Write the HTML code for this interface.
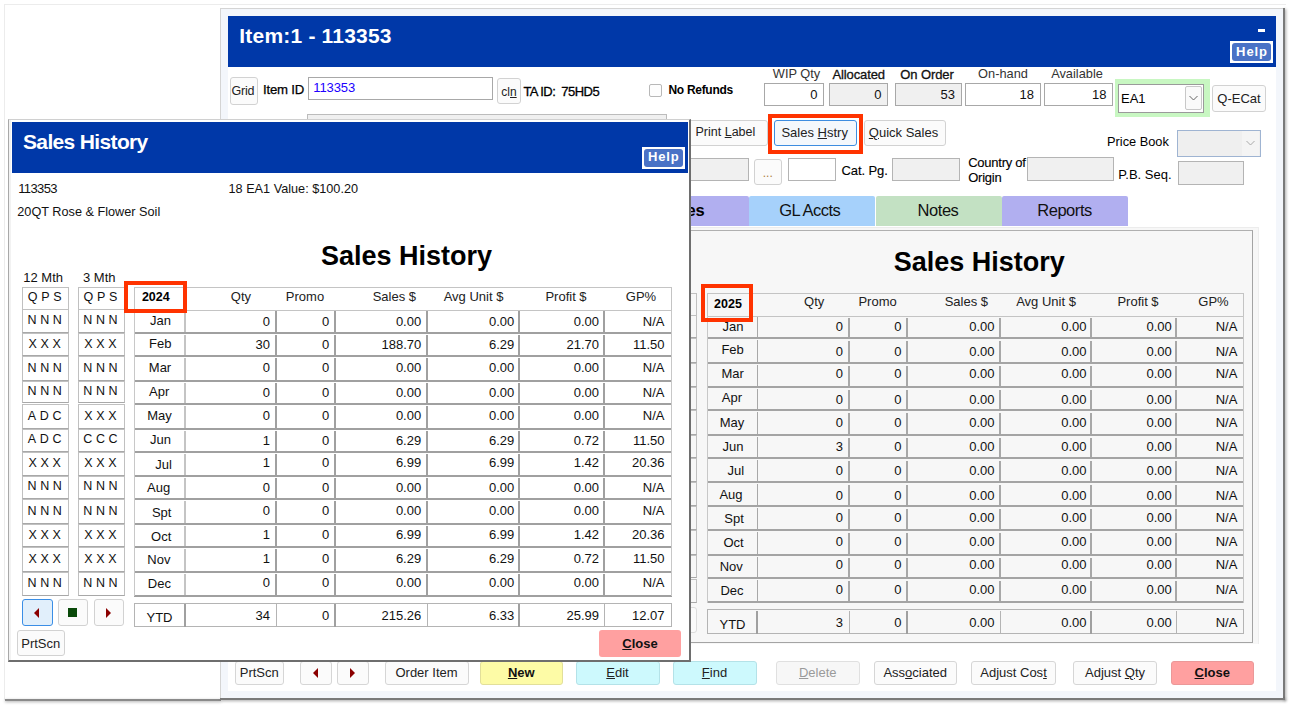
<!DOCTYPE html>
<html><head><meta charset="utf-8"><style>
html,body{margin:0;padding:0;}
body{width:1293px;height:709px;position:relative;overflow:hidden;background:#fff;font-family:"Liberation Sans", sans-serif;}
body>div{position:absolute;}
.t{white-space:nowrap;}
svg{position:absolute;}
</style></head><body>
<div style="left:4px;top:4px;width:1282px;height:1px;background:#ececec;"></div>
<div style="left:4px;top:4px;width:1px;height:696px;background:#ececec;"></div>
<div style="left:5px;top:699px;width:216px;height:2px;background:#8a8a8a;box-shadow:0 1px 3px rgba(0,0,0,.35);"></div>
<div style="left:1283px;top:8px;width:2px;height:692px;background:#7a7a7a;box-shadow:1px 1px 3px rgba(0,0,0,.4);"></div>
<div style="left:220px;top:698px;width:1065px;height:2px;background:#7a7a7a;box-shadow:1px 1px 3px rgba(0,0,0,.4);"></div>
<div style="left:220px;top:8px;width:1063px;height:690px;box-sizing:border-box;background:#f3f6fb;border-left:1px solid #d4d4d4;border-top:1px solid #d4d4d4;"></div>
<div style="left:228px;top:66px;width:1048px;height:625px;background:#fff;"></div>
<div style="left:228px;top:16px;width:1048px;height:51px;background:#0038a8;"></div>
<div class="t" style="top:25.22px;font-size:21px;line-height:21px;color:#fff;font-weight:bold;letter-spacing:0.2px;left:239.3px;">Item:1 - 113353</div>
<div style="left:1257.5px;top:29.3px;width:7.5px;height:2.3999999999999986px;background:#fff;"></div>
<div style="left:1230px;top:41px;width:43px;height:22px;background:#fff;"></div>
<div style="left:1232px;top:43px;width:39px;height:18px;background:#4a72c6;border-radius:3px;"></div>
<div class="t" style="top:44.80px;font-size:13px;line-height:13px;color:#fff;font-weight:bold;letter-spacing:0.9px;left:952px;width:600px;text-align:center;">Help</div>
<div style="left:230px;top:77px;width:28px;height:28px;box-sizing:border-box;background:#fbfbfb;border:1px solid #d2d2d2;border-radius:3px;"></div>
<div class="t" style="top:85.42px;font-size:12.5px;line-height:12.5px;color:#222;letter-spacing:-0.2px;left:-57.19999999999999px;width:600px;text-align:center;">Grid</div>
<div class="t" style="top:83.03px;font-size:13.2px;line-height:13.2px;color:#000;letter-spacing:-0.2px;left:263px;-webkit-text-stroke:0.25px #000;">Item ID</div>
<div style="left:308px;top:77px;width:185px;height:23px;box-sizing:border-box;background:#fff;border:1px solid #a8a8a8;"></div>
<div class="t" style="top:81.30px;font-size:13px;line-height:13px;color:#2000ff;letter-spacing:-0.1px;left:313.3px;">113353</div>
<div style="left:497px;top:78px;width:24px;height:26px;box-sizing:border-box;background:#fbfbfb;border:1px solid #d2d2d2;border-radius:3px;"></div>
<div class="t" style="top:85.84px;font-size:12px;line-height:12px;color:#222;left:209.0px;width:600px;text-align:center;">cl<u>n</u></div>
<div class="t" style="top:85.00px;font-size:13px;line-height:13px;color:#000;letter-spacing:-0.55px;left:523.4px;-webkit-text-stroke:0.3px #000;">TA ID:&nbsp; 75HD5</div>
<div style="left:649px;top:84px;width:13px;height:13px;box-sizing:border-box;border:1px solid #b8b8b8;border-radius:2px;background:#fdfdfd;"></div>
<div class="t" style="top:84.04px;font-size:12px;line-height:12px;color:#000;font-weight:bold;letter-spacing:-0.3px;left:668.5px;">No Refunds</div>
<div class="t" style="top:68.26px;font-size:12.8px;line-height:12.8px;color:#333;left:496.5px;width:600px;text-align:center;">WIP Qty</div>
<div class="t" style="top:68.10px;font-size:13px;line-height:13px;color:#111;letter-spacing:-0.1px;left:558.7px;width:600px;text-align:center;-webkit-text-stroke:0.3px #111;">Allocated</div>
<div class="t" style="top:68.10px;font-size:13px;line-height:13px;color:#111;letter-spacing:-0.1px;left:627px;width:600px;text-align:center;-webkit-text-stroke:0.3px #111;">On Order</div>
<div class="t" style="top:68.26px;font-size:12.8px;line-height:12.8px;color:#333;left:703px;width:600px;text-align:center;">On-hand</div>
<div class="t" style="top:68.26px;font-size:12.8px;line-height:12.8px;color:#333;left:777px;width:600px;text-align:center;">Available</div>
<div style="left:764px;top:83px;width:60px;height:22.5px;box-sizing:border-box;background:#fff;border:1px solid #a8a8a8;"></div>
<div class="t" style="top:88.00px;font-size:13px;line-height:13px;color:#111;left:217.5px;width:600px;text-align:right;">0</div>
<div style="left:829px;top:83px;width:59px;height:22.5px;box-sizing:border-box;background:#f0f0f0;border:1px solid #a8a8a8;"></div>
<div class="t" style="top:88.00px;font-size:13px;line-height:13px;color:#111;left:281.5px;width:600px;text-align:right;">0</div>
<div style="left:894.5px;top:83px;width:67.0px;height:22.5px;box-sizing:border-box;background:#f0f0f0;border:1px solid #a8a8a8;"></div>
<div class="t" style="top:88.00px;font-size:13px;line-height:13px;color:#111;left:355.0px;width:600px;text-align:right;">53</div>
<div style="left:965px;top:83px;width:75.5px;height:22.5px;box-sizing:border-box;background:#fff;border:1px solid #a8a8a8;"></div>
<div class="t" style="top:88.00px;font-size:13px;line-height:13px;color:#111;left:434.0px;width:600px;text-align:right;">18</div>
<div style="left:1044px;top:83px;width:69px;height:22.5px;box-sizing:border-box;background:#fff;border:1px solid #a8a8a8;"></div>
<div class="t" style="top:88.00px;font-size:13px;line-height:13px;color:#111;left:506.5px;width:600px;text-align:right;">18</div>
<div style="left:1114.5px;top:78.5px;width:95.5px;height:38.5px;background:#c8f7c2;"></div>
<div style="left:1118px;top:83.5px;width:86px;height:29.0px;box-sizing:border-box;background:#fff;border:1px solid #9a9a9a;"></div>
<div style="left:1185px;top:86px;width:17px;height:24px;box-sizing:border-box;border:1px solid #c8c8c8;background:#fafafa;border-radius:2px;"></div>
<svg style="position:absolute;left:1188px;top:94px" width="11" height="8"><path d="M1.5 2 L5.5 6 L9.5 2" stroke="#666" stroke-width="1" fill="none"/></svg>
<div class="t" style="top:92.00px;font-size:13px;line-height:13px;color:#000;left:1121px;">EA1</div>
<div style="left:1212px;top:85px;width:54px;height:27px;box-sizing:border-box;background:#fbfbfb;border:1px solid #d2d2d2;border-radius:3px;"></div>
<div class="t" style="top:92.00px;font-size:13px;line-height:13px;color:#222;left:939.0px;width:600px;text-align:center;">Q-ECat</div>
<div style="left:307px;top:114px;width:360px;height:26px;box-sizing:border-box;background:#f0f0f0;border:1px solid #bcbcbc;"></div>
<div style="left:660px;top:120px;width:107.5px;height:25.5px;box-sizing:border-box;background:#fbfbfb;border:1px solid #d2d2d2;border-radius:3px;"></div>
<div class="t" style="top:126.42px;font-size:12.5px;line-height:12.5px;color:#222;left:695.5px;">Print <u>L</u>abel</div>
<div style="left:768px;top:113.5px;width:95px;height:40.0px;box-sizing:border-box;border:4px solid #ff3300;"></div>
<div style="left:774px;top:119.5px;width:83px;height:26.5px;box-sizing:border-box;border:1px solid #3d8de0;border-radius:3px;background:#f4f8fc;"></div>
<div class="t" style="top:126.00px;font-size:13px;line-height:13px;color:#222;left:514.7px;width:600px;text-align:center;">Sales <u>H</u>stry</div>
<div style="left:863.5px;top:120px;width:82.0px;height:25.5px;box-sizing:border-box;background:#fbfbfb;border:1px solid #d2d2d2;border-radius:3px;"></div>
<div class="t" style="top:126.00px;font-size:13px;line-height:13px;color:#222;left:603.5px;width:600px;text-align:center;"><u>Q</u>uick Sales</div>
<div class="t" style="top:135.66px;font-size:12.8px;line-height:12.8px;color:#000;left:1107px;">Price Book</div>
<div style="left:1177px;top:129.5px;width:83.5px;height:27.5px;box-sizing:border-box;border:1px solid #9fb4d2;background:#efefef;"></div>
<div style="left:1242px;top:131px;width:17px;height:24.5px;background:#f4f4f4;"></div>
<svg style="position:absolute;left:1245px;top:139px" width="11" height="8"><path d="M1.5 2 L5.5 6 L9.5 2" stroke="#aaa" stroke-width="1" fill="none"/></svg>
<div style="left:600px;top:158px;width:148.5px;height:22.5px;box-sizing:border-box;background:#f0f0f0;border:1px solid #b4b4b4;"></div>
<div style="left:753.5px;top:158.5px;width:28.5px;height:26.5px;box-sizing:border-box;background:#fbfbfb;border:1px solid #d2d2d2;border-radius:3px;"></div>
<div class="t" style="top:166.84px;font-size:12px;line-height:12px;color:#b08040;left:467.75px;width:600px;text-align:center;">...</div>
<div style="left:787.5px;top:158px;width:48.5px;height:22.5px;box-sizing:border-box;background:#fff;border:1px solid #b4b4b4;"></div>
<div class="t" style="top:164.30px;font-size:13px;line-height:13px;color:#000;letter-spacing:-0.1px;left:841.5px;-webkit-text-stroke:0.12px #000;">Cat. Pg.</div>
<div style="left:891.5px;top:158px;width:68.0px;height:22.5px;box-sizing:border-box;background:#f0f0f0;border:1px solid #b4b4b4;"></div>
<div class="t" style="top:156.30px;font-size:13px;line-height:13px;color:#000;letter-spacing:-0.25px;left:968.2px;-webkit-text-stroke:0.12px #000;">Country of</div>
<div class="t" style="top:171.00px;font-size:13px;line-height:13px;color:#000;letter-spacing:-0.25px;left:968.2px;-webkit-text-stroke:0.12px #000;">Origin</div>
<div style="left:1026.5px;top:157px;width:87.5px;height:23.5px;box-sizing:border-box;background:#f0f0f0;border:1px solid #b4b4b4;"></div>
<div class="t" style="top:167.80px;font-size:13px;line-height:13px;color:#000;left:1118.3px;">P.B. Seq.</div>
<div style="left:1178px;top:161px;width:66px;height:23.5px;box-sizing:border-box;background:#f0f0f0;border:1px solid #b4b4b4;"></div>
<div style="left:600px;top:196px;width:148.5px;height:30px;background:#b1aff0;border-radius:2px 2px 0 0;"></div>
<div class="t" style="top:202.43px;font-size:16.5px;line-height:16.5px;color:#000;font-weight:bold;letter-spacing:-0.3px;left:104.29999999999995px;width:600px;text-align:right;">Sales</div>
<div style="left:749px;top:196px;width:126px;height:30px;background:#a6d1fb;border-radius:2px 2px 0 0;"></div>
<div class="t" style="top:202.23px;font-size:16.5px;line-height:16.5px;color:#111;letter-spacing:-0.55px;left:509.70000000000005px;width:600px;text-align:center;">GL Accts</div>
<div style="left:875.5px;top:196px;width:126.0px;height:30px;background:#c3e1c3;border-radius:2px 2px 0 0;"></div>
<div class="t" style="top:202.23px;font-size:16.5px;line-height:16.5px;color:#111;letter-spacing:-0.45px;left:638px;width:600px;text-align:center;">Notes</div>
<div style="left:1002px;top:196px;width:126.20000000000005px;height:30px;background:#b1aff0;border-radius:2px 2px 0 0;"></div>
<div class="t" style="top:202.23px;font-size:16.5px;line-height:16.5px;color:#111;letter-spacing:-0.45px;left:764.5px;width:600px;text-align:center;">Reports</div>
<div style="left:600px;top:226.5px;width:658.5px;height:417.5px;box-sizing:border-box;background:#f7f7f7;border-top:1px solid #ececec;border-right:1px solid #ededed;"></div>
<div style="left:600px;top:229.5px;width:653px;height:413.5px;box-sizing:border-box;background:#f7f7f7;border-top:1.5px solid #b0b0b0;border-right:1px solid #a4a4a4;border-bottom:1.5px solid #a4a4a4;"></div>
<div class="t" style="top:248.74px;font-size:27px;line-height:27px;color:#000;font-weight:bold;left:893.8px;">Sales History</div>
<div style="left:706.5px;top:292.5px;width:537.0px;height:24.0px;box-sizing:border-box;border:1px solid #c4c4c4;"></div>
<div class="t" style="top:297.82px;font-size:12.5px;line-height:12.5px;color:#000;font-weight:bold;left:428px;width:600px;text-align:center;">2025</div>
<div class="t" style="top:295.00px;font-size:13px;line-height:13px;color:#222;left:224.29999999999995px;width:600px;text-align:right;">Qty</div>
<div class="t" style="top:295.00px;font-size:13px;line-height:13px;color:#222;left:577.6px;width:600px;text-align:center;">Promo</div>
<div class="t" style="top:295.30px;font-size:13px;line-height:13px;color:#222;left:388px;width:600px;text-align:right;">Sales $</div>
<div class="t" style="top:295.30px;font-size:13px;line-height:13px;color:#222;left:746px;width:600px;text-align:center;">Avg Unit $</div>
<div class="t" style="top:295.30px;font-size:13px;line-height:13px;color:#222;left:838px;width:600px;text-align:center;">Profit $</div>
<div class="t" style="top:295.30px;font-size:13px;line-height:13px;color:#222;left:913.5px;width:600px;text-align:center;">GP%</div>
<div style="left:706.5px;top:337px;width:537.0px;height:2px;background:#a4a4a4;"></div>
<div class="t" style="top:319.60px;font-size:13px;line-height:13px;color:#111;left:432.9px;width:600px;text-align:center;">Jan</div>
<div class="t" style="top:320.40px;font-size:13px;line-height:13px;color:#111;left:243.0px;width:600px;text-align:right;">0</div>
<div class="t" style="top:320.40px;font-size:13px;line-height:13px;color:#111;left:301.5px;width:600px;text-align:right;">0</div>
<div class="t" style="top:320.40px;font-size:13px;line-height:13px;color:#111;left:394.6px;width:600px;text-align:right;">0.00</div>
<div class="t" style="top:320.40px;font-size:13px;line-height:13px;color:#111;left:486.5999999999999px;width:600px;text-align:right;">0.00</div>
<div class="t" style="top:320.40px;font-size:13px;line-height:13px;color:#111;left:571.8px;width:600px;text-align:right;">0.00</div>
<div class="t" style="top:320.40px;font-size:13px;line-height:13px;color:#111;left:637.4000000000001px;width:600px;text-align:right;">N/A</div>
<div style="left:757px;top:317px;width:1.2000000000000455px;height:20px;background:#a8a8a8;"></div>
<div style="left:847.5px;top:318px;width:2.0px;height:19px;background:#a8a8a8;"></div>
<div style="left:906px;top:318px;width:2px;height:19px;background:#a8a8a8;"></div>
<div style="left:999px;top:318px;width:2px;height:19px;background:#a8a8a8;"></div>
<div style="left:1090px;top:318px;width:2px;height:19px;background:#a8a8a8;"></div>
<div style="left:1175px;top:318px;width:2px;height:19px;background:#a8a8a8;"></div>
<div style="left:706.5px;top:362px;width:537.0px;height:2px;background:#a4a4a4;"></div>
<div class="t" style="top:343.00px;font-size:13px;line-height:13px;color:#111;left:432.6px;width:600px;text-align:center;">Feb</div>
<div class="t" style="top:344.90px;font-size:13px;line-height:13px;color:#111;left:243.0px;width:600px;text-align:right;">0</div>
<div class="t" style="top:344.90px;font-size:13px;line-height:13px;color:#111;left:301.5px;width:600px;text-align:right;">0</div>
<div class="t" style="top:344.90px;font-size:13px;line-height:13px;color:#111;left:394.6px;width:600px;text-align:right;">0.00</div>
<div class="t" style="top:344.90px;font-size:13px;line-height:13px;color:#111;left:486.5999999999999px;width:600px;text-align:right;">0.00</div>
<div class="t" style="top:344.90px;font-size:13px;line-height:13px;color:#111;left:571.8px;width:600px;text-align:right;">0.00</div>
<div class="t" style="top:344.90px;font-size:13px;line-height:13px;color:#111;left:637.4000000000001px;width:600px;text-align:right;">N/A</div>
<div style="left:757px;top:340px;width:1.2000000000000455px;height:22px;background:#a8a8a8;"></div>
<div style="left:847.5px;top:341px;width:2.0px;height:21px;background:#a8a8a8;"></div>
<div style="left:906px;top:341px;width:2px;height:21px;background:#a8a8a8;"></div>
<div style="left:999px;top:341px;width:2px;height:21px;background:#a8a8a8;"></div>
<div style="left:1090px;top:341px;width:2px;height:21px;background:#a8a8a8;"></div>
<div style="left:1175px;top:341px;width:2px;height:21px;background:#a8a8a8;"></div>
<div style="left:706.5px;top:386px;width:537.0px;height:2px;background:#a4a4a4;"></div>
<div class="t" style="top:367.40px;font-size:13px;line-height:13px;color:#111;left:432.6px;width:600px;text-align:center;">Mar</div>
<div class="t" style="top:367.20px;font-size:13px;line-height:13px;color:#111;left:243.0px;width:600px;text-align:right;">0</div>
<div class="t" style="top:367.20px;font-size:13px;line-height:13px;color:#111;left:301.5px;width:600px;text-align:right;">0</div>
<div class="t" style="top:367.20px;font-size:13px;line-height:13px;color:#111;left:394.6px;width:600px;text-align:right;">0.00</div>
<div class="t" style="top:367.20px;font-size:13px;line-height:13px;color:#111;left:486.5999999999999px;width:600px;text-align:right;">0.00</div>
<div class="t" style="top:367.20px;font-size:13px;line-height:13px;color:#111;left:571.8px;width:600px;text-align:right;">0.00</div>
<div class="t" style="top:367.20px;font-size:13px;line-height:13px;color:#111;left:637.4000000000001px;width:600px;text-align:right;">N/A</div>
<div style="left:757px;top:365px;width:1.2000000000000455px;height:21px;background:#a8a8a8;"></div>
<div style="left:847.5px;top:366px;width:2.0px;height:20px;background:#a8a8a8;"></div>
<div style="left:906px;top:366px;width:2px;height:20px;background:#a8a8a8;"></div>
<div style="left:999px;top:366px;width:2px;height:20px;background:#a8a8a8;"></div>
<div style="left:1090px;top:366px;width:2px;height:20px;background:#a8a8a8;"></div>
<div style="left:1175px;top:366px;width:2px;height:20px;background:#a8a8a8;"></div>
<div style="left:706.5px;top:409px;width:537.0px;height:2px;background:#a4a4a4;"></div>
<div class="t" style="top:391.00px;font-size:13px;line-height:13px;color:#111;left:431.9px;width:600px;text-align:center;">Apr</div>
<div class="t" style="top:393.00px;font-size:13px;line-height:13px;color:#111;left:243.0px;width:600px;text-align:right;">0</div>
<div class="t" style="top:393.00px;font-size:13px;line-height:13px;color:#111;left:301.5px;width:600px;text-align:right;">0</div>
<div class="t" style="top:393.00px;font-size:13px;line-height:13px;color:#111;left:394.6px;width:600px;text-align:right;">0.00</div>
<div class="t" style="top:393.00px;font-size:13px;line-height:13px;color:#111;left:486.5999999999999px;width:600px;text-align:right;">0.00</div>
<div class="t" style="top:393.00px;font-size:13px;line-height:13px;color:#111;left:571.8px;width:600px;text-align:right;">0.00</div>
<div class="t" style="top:393.00px;font-size:13px;line-height:13px;color:#111;left:637.4000000000001px;width:600px;text-align:right;">N/A</div>
<div style="left:757px;top:389px;width:1.2000000000000455px;height:20px;background:#a8a8a8;"></div>
<div style="left:847.5px;top:390px;width:2.0px;height:19px;background:#a8a8a8;"></div>
<div style="left:906px;top:390px;width:2px;height:19px;background:#a8a8a8;"></div>
<div style="left:999px;top:390px;width:2px;height:19px;background:#a8a8a8;"></div>
<div style="left:1090px;top:390px;width:2px;height:19px;background:#a8a8a8;"></div>
<div style="left:1175px;top:390px;width:2px;height:19px;background:#a8a8a8;"></div>
<div style="left:706.5px;top:434px;width:537.0px;height:2px;background:#a4a4a4;"></div>
<div class="t" style="top:415.60px;font-size:13px;line-height:13px;color:#111;left:432px;width:600px;text-align:center;">May</div>
<div class="t" style="top:416.00px;font-size:13px;line-height:13px;color:#111;left:243.0px;width:600px;text-align:right;">0</div>
<div class="t" style="top:416.00px;font-size:13px;line-height:13px;color:#111;left:301.5px;width:600px;text-align:right;">0</div>
<div class="t" style="top:416.00px;font-size:13px;line-height:13px;color:#111;left:394.6px;width:600px;text-align:right;">0.00</div>
<div class="t" style="top:416.00px;font-size:13px;line-height:13px;color:#111;left:486.5999999999999px;width:600px;text-align:right;">0.00</div>
<div class="t" style="top:416.00px;font-size:13px;line-height:13px;color:#111;left:571.8px;width:600px;text-align:right;">0.00</div>
<div class="t" style="top:416.00px;font-size:13px;line-height:13px;color:#111;left:637.4000000000001px;width:600px;text-align:right;">N/A</div>
<div style="left:757px;top:412px;width:1.2000000000000455px;height:22px;background:#a8a8a8;"></div>
<div style="left:847.5px;top:413px;width:2.0px;height:21px;background:#a8a8a8;"></div>
<div style="left:906px;top:413px;width:2px;height:21px;background:#a8a8a8;"></div>
<div style="left:999px;top:413px;width:2px;height:21px;background:#a8a8a8;"></div>
<div style="left:1090px;top:413px;width:2px;height:21px;background:#a8a8a8;"></div>
<div style="left:1175px;top:413px;width:2px;height:21px;background:#a8a8a8;"></div>
<div style="left:706.5px;top:457px;width:537.0px;height:2px;background:#a4a4a4;"></div>
<div class="t" style="top:440.00px;font-size:13px;line-height:13px;color:#111;left:432.9px;width:600px;text-align:center;">Jun</div>
<div class="t" style="top:440.00px;font-size:13px;line-height:13px;color:#111;left:243.0px;width:600px;text-align:right;">3</div>
<div class="t" style="top:440.00px;font-size:13px;line-height:13px;color:#111;left:301.5px;width:600px;text-align:right;">0</div>
<div class="t" style="top:440.00px;font-size:13px;line-height:13px;color:#111;left:394.6px;width:600px;text-align:right;">0.00</div>
<div class="t" style="top:440.00px;font-size:13px;line-height:13px;color:#111;left:486.5999999999999px;width:600px;text-align:right;">0.00</div>
<div class="t" style="top:440.00px;font-size:13px;line-height:13px;color:#111;left:571.8px;width:600px;text-align:right;">0.00</div>
<div class="t" style="top:440.00px;font-size:13px;line-height:13px;color:#111;left:637.4000000000001px;width:600px;text-align:right;">N/A</div>
<div style="left:757px;top:437px;width:1.2000000000000455px;height:20px;background:#a8a8a8;"></div>
<div style="left:847.5px;top:438px;width:2.0px;height:19px;background:#a8a8a8;"></div>
<div style="left:906px;top:438px;width:2px;height:19px;background:#a8a8a8;"></div>
<div style="left:999px;top:438px;width:2px;height:19px;background:#a8a8a8;"></div>
<div style="left:1090px;top:438px;width:2px;height:19px;background:#a8a8a8;"></div>
<div style="left:1175px;top:438px;width:2px;height:19px;background:#a8a8a8;"></div>
<div style="left:706.5px;top:481px;width:537.0px;height:2px;background:#a4a4a4;"></div>
<div class="t" style="top:464.30px;font-size:13px;line-height:13px;color:#111;left:435.9px;width:600px;text-align:center;">Jul</div>
<div class="t" style="top:463.70px;font-size:13px;line-height:13px;color:#111;left:243.0px;width:600px;text-align:right;">0</div>
<div class="t" style="top:463.70px;font-size:13px;line-height:13px;color:#111;left:301.5px;width:600px;text-align:right;">0</div>
<div class="t" style="top:463.70px;font-size:13px;line-height:13px;color:#111;left:394.6px;width:600px;text-align:right;">0.00</div>
<div class="t" style="top:463.70px;font-size:13px;line-height:13px;color:#111;left:486.5999999999999px;width:600px;text-align:right;">0.00</div>
<div class="t" style="top:463.70px;font-size:13px;line-height:13px;color:#111;left:571.8px;width:600px;text-align:right;">0.00</div>
<div class="t" style="top:463.70px;font-size:13px;line-height:13px;color:#111;left:637.4000000000001px;width:600px;text-align:right;">N/A</div>
<div style="left:757px;top:460px;width:1.2000000000000455px;height:21px;background:#a8a8a8;"></div>
<div style="left:847.5px;top:461px;width:2.0px;height:20px;background:#a8a8a8;"></div>
<div style="left:906px;top:461px;width:2px;height:20px;background:#a8a8a8;"></div>
<div style="left:999px;top:461px;width:2px;height:20px;background:#a8a8a8;"></div>
<div style="left:1090px;top:461px;width:2px;height:20px;background:#a8a8a8;"></div>
<div style="left:1175px;top:461px;width:2px;height:20px;background:#a8a8a8;"></div>
<div style="left:706.5px;top:505px;width:537.0px;height:2px;background:#a4a4a4;"></div>
<div class="t" style="top:488.40px;font-size:13px;line-height:13px;color:#111;left:431px;width:600px;text-align:center;">Aug</div>
<div class="t" style="top:488.80px;font-size:13px;line-height:13px;color:#111;left:243.0px;width:600px;text-align:right;">0</div>
<div class="t" style="top:488.80px;font-size:13px;line-height:13px;color:#111;left:301.5px;width:600px;text-align:right;">0</div>
<div class="t" style="top:488.80px;font-size:13px;line-height:13px;color:#111;left:394.6px;width:600px;text-align:right;">0.00</div>
<div class="t" style="top:488.80px;font-size:13px;line-height:13px;color:#111;left:486.5999999999999px;width:600px;text-align:right;">0.00</div>
<div class="t" style="top:488.80px;font-size:13px;line-height:13px;color:#111;left:571.8px;width:600px;text-align:right;">0.00</div>
<div class="t" style="top:488.80px;font-size:13px;line-height:13px;color:#111;left:637.4000000000001px;width:600px;text-align:right;">N/A</div>
<div style="left:757px;top:484px;width:1.2000000000000455px;height:21px;background:#a8a8a8;"></div>
<div style="left:847.5px;top:485px;width:2.0px;height:20px;background:#a8a8a8;"></div>
<div style="left:906px;top:485px;width:2px;height:20px;background:#a8a8a8;"></div>
<div style="left:999px;top:485px;width:2px;height:20px;background:#a8a8a8;"></div>
<div style="left:1090px;top:485px;width:2px;height:20px;background:#a8a8a8;"></div>
<div style="left:1175px;top:485px;width:2px;height:20px;background:#a8a8a8;"></div>
<div style="left:706.5px;top:529px;width:537.0px;height:2px;background:#a4a4a4;"></div>
<div class="t" style="top:511.80px;font-size:13px;line-height:13px;color:#111;left:434px;width:600px;text-align:center;">Spt</div>
<div class="t" style="top:511.30px;font-size:13px;line-height:13px;color:#111;left:243.0px;width:600px;text-align:right;">0</div>
<div class="t" style="top:511.30px;font-size:13px;line-height:13px;color:#111;left:301.5px;width:600px;text-align:right;">0</div>
<div class="t" style="top:511.30px;font-size:13px;line-height:13px;color:#111;left:394.6px;width:600px;text-align:right;">0.00</div>
<div class="t" style="top:511.30px;font-size:13px;line-height:13px;color:#111;left:486.5999999999999px;width:600px;text-align:right;">0.00</div>
<div class="t" style="top:511.30px;font-size:13px;line-height:13px;color:#111;left:571.8px;width:600px;text-align:right;">0.00</div>
<div class="t" style="top:511.30px;font-size:13px;line-height:13px;color:#111;left:637.4000000000001px;width:600px;text-align:right;">N/A</div>
<div style="left:757px;top:508px;width:1.2000000000000455px;height:21px;background:#a8a8a8;"></div>
<div style="left:847.5px;top:509px;width:2.0px;height:20px;background:#a8a8a8;"></div>
<div style="left:906px;top:509px;width:2px;height:20px;background:#a8a8a8;"></div>
<div style="left:999px;top:509px;width:2px;height:20px;background:#a8a8a8;"></div>
<div style="left:1090px;top:509px;width:2px;height:20px;background:#a8a8a8;"></div>
<div style="left:1175px;top:509px;width:2px;height:20px;background:#a8a8a8;"></div>
<div style="left:706.5px;top:554px;width:537.0px;height:2px;background:#a4a4a4;"></div>
<div class="t" style="top:536.40px;font-size:13px;line-height:13px;color:#111;left:433.6px;width:600px;text-align:center;">Oct</div>
<div class="t" style="top:534.70px;font-size:13px;line-height:13px;color:#111;left:243.0px;width:600px;text-align:right;">0</div>
<div class="t" style="top:534.70px;font-size:13px;line-height:13px;color:#111;left:301.5px;width:600px;text-align:right;">0</div>
<div class="t" style="top:534.70px;font-size:13px;line-height:13px;color:#111;left:394.6px;width:600px;text-align:right;">0.00</div>
<div class="t" style="top:534.70px;font-size:13px;line-height:13px;color:#111;left:486.5999999999999px;width:600px;text-align:right;">0.00</div>
<div class="t" style="top:534.70px;font-size:13px;line-height:13px;color:#111;left:571.8px;width:600px;text-align:right;">0.00</div>
<div class="t" style="top:534.70px;font-size:13px;line-height:13px;color:#111;left:637.4000000000001px;width:600px;text-align:right;">N/A</div>
<div style="left:757px;top:532px;width:1.2000000000000455px;height:22px;background:#a8a8a8;"></div>
<div style="left:847.5px;top:533px;width:2.0px;height:21px;background:#a8a8a8;"></div>
<div style="left:906px;top:533px;width:2px;height:21px;background:#a8a8a8;"></div>
<div style="left:999px;top:533px;width:2px;height:21px;background:#a8a8a8;"></div>
<div style="left:1090px;top:533px;width:2px;height:21px;background:#a8a8a8;"></div>
<div style="left:1175px;top:533px;width:2px;height:21px;background:#a8a8a8;"></div>
<div style="left:706.5px;top:577px;width:537.0px;height:2px;background:#a4a4a4;"></div>
<div class="t" style="top:560.10px;font-size:13px;line-height:13px;color:#111;left:431.29999999999995px;width:600px;text-align:center;">Nov</div>
<div class="t" style="top:558.10px;font-size:13px;line-height:13px;color:#111;left:243.0px;width:600px;text-align:right;">0</div>
<div class="t" style="top:558.10px;font-size:13px;line-height:13px;color:#111;left:301.5px;width:600px;text-align:right;">0</div>
<div class="t" style="top:558.10px;font-size:13px;line-height:13px;color:#111;left:394.6px;width:600px;text-align:right;">0.00</div>
<div class="t" style="top:558.10px;font-size:13px;line-height:13px;color:#111;left:486.5999999999999px;width:600px;text-align:right;">0.00</div>
<div class="t" style="top:558.10px;font-size:13px;line-height:13px;color:#111;left:571.8px;width:600px;text-align:right;">0.00</div>
<div class="t" style="top:558.10px;font-size:13px;line-height:13px;color:#111;left:637.4000000000001px;width:600px;text-align:right;">N/A</div>
<div style="left:757px;top:557px;width:1.2000000000000455px;height:20px;background:#a8a8a8;"></div>
<div style="left:847.5px;top:558px;width:2.0px;height:19px;background:#a8a8a8;"></div>
<div style="left:906px;top:558px;width:2px;height:19px;background:#a8a8a8;"></div>
<div style="left:999px;top:558px;width:2px;height:19px;background:#a8a8a8;"></div>
<div style="left:1090px;top:558px;width:2px;height:19px;background:#a8a8a8;"></div>
<div style="left:1175px;top:558px;width:2px;height:19px;background:#a8a8a8;"></div>
<div style="left:706.5px;top:601px;width:537.0px;height:2px;background:#a4a4a4;"></div>
<div class="t" style="top:584.40px;font-size:13px;line-height:13px;color:#111;left:432px;width:600px;text-align:center;">Dec</div>
<div class="t" style="top:582.80px;font-size:13px;line-height:13px;color:#111;left:243.0px;width:600px;text-align:right;">0</div>
<div class="t" style="top:582.80px;font-size:13px;line-height:13px;color:#111;left:301.5px;width:600px;text-align:right;">0</div>
<div class="t" style="top:582.80px;font-size:13px;line-height:13px;color:#111;left:394.6px;width:600px;text-align:right;">0.00</div>
<div class="t" style="top:582.80px;font-size:13px;line-height:13px;color:#111;left:486.5999999999999px;width:600px;text-align:right;">0.00</div>
<div class="t" style="top:582.80px;font-size:13px;line-height:13px;color:#111;left:571.8px;width:600px;text-align:right;">0.00</div>
<div class="t" style="top:582.80px;font-size:13px;line-height:13px;color:#111;left:637.4000000000001px;width:600px;text-align:right;">N/A</div>
<div style="left:757px;top:580px;width:1.2000000000000455px;height:21px;background:#a8a8a8;"></div>
<div style="left:847.5px;top:581px;width:2.0px;height:20px;background:#a8a8a8;"></div>
<div style="left:906px;top:581px;width:2px;height:20px;background:#a8a8a8;"></div>
<div style="left:999px;top:581px;width:2px;height:20px;background:#a8a8a8;"></div>
<div style="left:1090px;top:581px;width:2px;height:20px;background:#a8a8a8;"></div>
<div style="left:1175px;top:581px;width:2px;height:20px;background:#a8a8a8;"></div>
<div style="left:706.5px;top:315.5px;width:1.0px;height:287.0px;background:#c8c8c8;"></div>
<div style="left:1242.5px;top:315.5px;width:1.0px;height:287.0px;background:#c8c8c8;"></div>
<div style="left:706.5px;top:609px;width:537.0px;height:25px;box-sizing:border-box;border:1px solid #b4b4b4;"></div>
<div class="t" style="top:617.50px;font-size:13px;line-height:13px;color:#111;left:432.5px;width:600px;text-align:center;">YTD</div>
<div class="t" style="top:615.50px;font-size:13px;line-height:13px;color:#111;left:243.0px;width:600px;text-align:right;">3</div>
<div class="t" style="top:615.50px;font-size:13px;line-height:13px;color:#111;left:301.5px;width:600px;text-align:right;">0</div>
<div class="t" style="top:615.50px;font-size:13px;line-height:13px;color:#111;left:394.6px;width:600px;text-align:right;">0.00</div>
<div class="t" style="top:615.50px;font-size:13px;line-height:13px;color:#111;left:486.5999999999999px;width:600px;text-align:right;">0.00</div>
<div class="t" style="top:615.50px;font-size:13px;line-height:13px;color:#111;left:571.8px;width:600px;text-align:right;">0.00</div>
<div class="t" style="top:615.50px;font-size:13px;line-height:13px;color:#111;left:637.4000000000001px;width:600px;text-align:right;">N/A</div>
<div style="left:756px;top:611px;width:2px;height:22.5px;background:#a0a0a0;"></div>
<div style="left:848.5px;top:611px;width:1.0px;height:22.5px;background:#b4b4b4;"></div>
<div style="left:906px;top:611px;width:2px;height:22.5px;background:#a0a0a0;"></div>
<div style="left:1000px;top:611px;width:1px;height:22.5px;background:#b4b4b4;"></div>
<div style="left:1090px;top:611px;width:2px;height:22.5px;background:#a0a0a0;"></div>
<div style="left:1176px;top:611px;width:1px;height:22.5px;background:#b4b4b4;"></div>
<div style="left:670px;top:293px;width:27px;height:23px;box-sizing:border-box;border:1px solid #c0c0c0;border-bottom:1.5px solid #a8a8a8;"></div>
<div style="left:670px;top:315.0px;width:27px;height:23.399999999999977px;box-sizing:border-box;border:1px solid #c0c0c0;border-bottom:1.5px solid #a8a8a8;"></div>
<div style="left:670px;top:338.4px;width:27px;height:24.5px;box-sizing:border-box;border:1px solid #c0c0c0;border-bottom:1.5px solid #a8a8a8;"></div>
<div style="left:670px;top:362.9px;width:27px;height:24.100000000000023px;box-sizing:border-box;border:1px solid #c0c0c0;border-bottom:1.5px solid #a8a8a8;"></div>
<div style="left:670px;top:387px;width:27px;height:23.100000000000023px;box-sizing:border-box;border:1px solid #c0c0c0;border-bottom:1.5px solid #a8a8a8;"></div>
<div style="left:670px;top:410.1px;width:27px;height:25.0px;box-sizing:border-box;border:1px solid #c0c0c0;border-bottom:1.5px solid #a8a8a8;"></div>
<div style="left:670px;top:435.1px;width:27px;height:23.099999999999966px;box-sizing:border-box;border:1px solid #c0c0c0;border-bottom:1.5px solid #a8a8a8;"></div>
<div style="left:670px;top:458.2px;width:27px;height:23.5px;box-sizing:border-box;border:1px solid #c0c0c0;border-bottom:1.5px solid #a8a8a8;"></div>
<div style="left:670px;top:481.7px;width:27px;height:24.69999999999999px;box-sizing:border-box;border:1px solid #c0c0c0;border-bottom:1.5px solid #a8a8a8;"></div>
<div style="left:670px;top:506.4px;width:27px;height:23.399999999999977px;box-sizing:border-box;border:1px solid #c0c0c0;border-bottom:1.5px solid #a8a8a8;"></div>
<div style="left:670px;top:529.8px;width:27px;height:25.300000000000068px;box-sizing:border-box;border:1px solid #c0c0c0;border-bottom:1.5px solid #a8a8a8;"></div>
<div style="left:670px;top:555.1px;width:27px;height:23.399999999999977px;box-sizing:border-box;border:1px solid #c0c0c0;border-bottom:1.5px solid #a8a8a8;"></div>
<div style="left:670px;top:578.5px;width:27px;height:24.0px;box-sizing:border-box;border:1px solid #c0c0c0;border-bottom:1.5px solid #a8a8a8;"></div>
<div style="left:660px;top:606.5px;width:36.5px;height:26.0px;box-sizing:border-box;border:1px solid #dcdcdc;border-radius:3px;background:#fafafa;"></div>
<div style="left:701px;top:284px;width:52px;height:38px;box-sizing:border-box;border:4px solid #ff3300;"></div>
<div style="left:235px;top:660.5px;width:48.5px;height:24.5px;box-sizing:border-box;background:#fbfbfb;border:1px solid #d6d6d6;border-radius:3px;"></div>
<div class="t" style="top:666.00px;font-size:13px;line-height:13px;color:#222;left:-40.75px;width:600px;text-align:center;">PrtScn</div>
<div style="left:299.5px;top:660.5px;width:32.0px;height:24.5px;box-sizing:border-box;background:#fbfbfb;border:1px solid #d6d6d6;border-radius:3px;"></div>
<div style="left:337px;top:660.5px;width:31.5px;height:24.5px;box-sizing:border-box;background:#fbfbfb;border:1px solid #d6d6d6;border-radius:3px;"></div>
<div style="left:384.5px;top:660.5px;width:84.0px;height:24.5px;box-sizing:border-box;background:#fbfbfb;border:1px solid #d6d6d6;border-radius:3px;"></div>
<div class="t" style="top:666.00px;font-size:13px;line-height:13px;color:#222;left:126.5px;width:600px;text-align:center;">Order Item</div>
<div style="left:479.5px;top:660.5px;width:83.5px;height:24.5px;box-sizing:border-box;background:#fdfba6;border:1px solid #e2df9a;border-radius:3px;"></div>
<div class="t" style="top:666.00px;font-size:13px;line-height:13px;color:#111;font-weight:bold;left:221.25px;width:600px;text-align:center;"><u>N</u>ew</div>
<div style="left:575.5px;top:660.5px;width:84.0px;height:24.5px;box-sizing:border-box;background:#cdf9fd;border:1px solid #b4e2e8;border-radius:3px;"></div>
<div class="t" style="top:666.00px;font-size:13px;line-height:13px;color:#222;left:317.5px;width:600px;text-align:center;"><u>E</u>dit</div>
<div style="left:672.5px;top:660.5px;width:84.0px;height:24.5px;box-sizing:border-box;background:#cdf9fd;border:1px solid #b4e2e8;border-radius:3px;"></div>
<div class="t" style="top:666.00px;font-size:13px;line-height:13px;color:#222;left:414.5px;width:600px;text-align:center;"><u>F</u>ind</div>
<div style="left:776px;top:660.5px;width:83.5px;height:24.5px;box-sizing:border-box;background:#f7f7f7;border:1px solid #e0e0e0;border-radius:3px;"></div>
<div class="t" style="top:666.00px;font-size:13px;line-height:13px;color:#9a9a9a;left:517.75px;width:600px;text-align:center;"><u>D</u>elete</div>
<div style="left:873.5px;top:660.5px;width:83.5px;height:24.5px;box-sizing:border-box;background:#fbfbfb;border:1px solid #d6d6d6;border-radius:3px;"></div>
<div class="t" style="top:666.00px;font-size:13px;line-height:13px;color:#222;left:615.25px;width:600px;text-align:center;">Ass<u>o</u>ciated</div>
<div style="left:971px;top:660.5px;width:85px;height:24.5px;box-sizing:border-box;background:#fbfbfb;border:1px solid #d6d6d6;border-radius:3px;"></div>
<div class="t" style="top:666.00px;font-size:13px;line-height:13px;color:#222;left:713.5px;width:600px;text-align:center;">Adjust Cos<u>t</u></div>
<div style="left:1073px;top:660.5px;width:84px;height:24.5px;box-sizing:border-box;background:#fbfbfb;border:1px solid #d6d6d6;border-radius:3px;"></div>
<div class="t" style="top:666.00px;font-size:13px;line-height:13px;color:#222;left:815.0px;width:600px;text-align:center;">Adjust <u>Q</u>ty</div>
<div style="left:1170.5px;top:660.5px;width:83.5px;height:24.5px;box-sizing:border-box;background:#ffa0a0;border:1px solid #eb9898;border-radius:3px;"></div>
<div class="t" style="top:666.00px;font-size:13px;line-height:13px;color:#111;font-weight:bold;left:912.25px;width:600px;text-align:center;"><u>C</u>lose</div>
<svg style="position:absolute;left:312px;top:668px" width="8" height="10"><path d="M6 0 L1 5 L6 10 Z" fill="#8b0000"/></svg>
<svg style="position:absolute;left:349px;top:668px" width="8" height="10"><path d="M1 0 L6 5 L1 10 Z" fill="#8b0000"/></svg>
<div style="left:8px;top:119px;width:683px;height:543px;box-sizing:border-box;background:#fff;border-left:1px solid #a8a8a8;border-top:1px solid #d0d0d0;border-right:2px solid #6e6e6e;border-bottom:2px solid #6e6e6e;"></div>
<div style="left:9px;top:120px;width:2px;height:540px;background:#f2f2f2;"></div>
<div style="left:12px;top:122px;width:676px;height:51px;background:#0038a8;"></div>
<div class="t" style="top:131.22px;font-size:21px;line-height:21px;color:#fff;font-weight:bold;letter-spacing:-0.65px;left:23px;">Sales History</div>
<div style="left:642px;top:147px;width:43px;height:22px;background:#fff;"></div>
<div style="left:644px;top:149px;width:39px;height:18px;background:#4a72c6;border-radius:3px;"></div>
<div class="t" style="top:150.20px;font-size:13px;line-height:13px;color:#fff;font-weight:bold;letter-spacing:0.9px;left:363.79999999999995px;width:600px;text-align:center;">Help</div>
<div class="t" style="top:182.30px;font-size:13px;line-height:13px;color:#111;letter-spacing:-0.6px;left:18.2px;">113353</div>
<div class="t" style="top:183.25px;font-size:12.7px;line-height:12.7px;color:#111;left:228.5px;">18 EA1 Value: $100.20</div>
<div class="t" style="top:206.25px;font-size:12.7px;line-height:12.7px;color:#111;left:17.3px;">20QT Rose &amp; Flower Soil</div>
<div class="t" style="top:242.74px;font-size:27px;line-height:27px;color:#000;font-weight:bold;left:321px;">Sales History</div>
<div class="t" style="top:270.80px;font-size:13px;line-height:13px;color:#111;left:23.3px;">12 Mth</div>
<div class="t" style="top:270.80px;font-size:13px;line-height:13px;color:#111;left:83px;">3 Mth</div>
<div style="left:22px;top:287px;width:47px;height:23px;box-sizing:border-box;border:1px solid #c0c0c0;border-bottom:1.5px solid #a8a8a8;"></div>
<div class="t" style="top:291.22px;font-size:12.5px;line-height:12.5px;color:#111;letter-spacing:0.1px;left:-255.3px;width:600px;text-align:center;">Q&nbsp;P&nbsp;S</div>
<div style="left:77.5px;top:287px;width:47.5px;height:23px;box-sizing:border-box;border:1px solid #c0c0c0;border-bottom:1.5px solid #a8a8a8;"></div>
<div class="t" style="top:291.22px;font-size:12.5px;line-height:12.5px;color:#111;letter-spacing:0.1px;left:-199.55px;width:600px;text-align:center;">Q&nbsp;P&nbsp;S</div>
<div style="left:134px;top:287px;width:537.5px;height:23.5px;box-sizing:border-box;border:1px solid #c4c4c4;"></div>
<div class="t" style="top:291.12px;font-size:12.5px;line-height:12.5px;color:#000;font-weight:bold;left:-144.2px;width:600px;text-align:center;">2024</div>
<div class="t" style="top:289.70px;font-size:13px;line-height:13px;color:#222;left:-349px;width:600px;text-align:right;">Qty</div>
<div class="t" style="top:289.70px;font-size:13px;line-height:13px;color:#222;left:5px;width:600px;text-align:center;">Promo</div>
<div class="t" style="top:289.70px;font-size:13px;line-height:13px;color:#222;left:-184px;width:600px;text-align:right;">Sales $</div>
<div class="t" style="top:289.70px;font-size:13px;line-height:13px;color:#222;left:173.5px;width:600px;text-align:center;">Avg Unit $</div>
<div class="t" style="top:289.70px;font-size:13px;line-height:13px;color:#222;left:266px;width:600px;text-align:center;">Profit $</div>
<div class="t" style="top:289.70px;font-size:13px;line-height:13px;color:#222;left:341px;width:600px;text-align:center;">GP%</div>
<div style="left:22px;top:309.3px;width:47px;height:23.5px;box-sizing:border-box;border:1px solid #c0c0c0;border-bottom:1.5px solid #a8a8a8;"></div>
<div class="t" style="top:314.02px;font-size:12.5px;line-height:12.5px;color:#111;letter-spacing:0.1px;left:-255.3px;width:600px;text-align:center;">N&nbsp;N&nbsp;N</div>
<div style="left:77.5px;top:309.3px;width:47.5px;height:23.5px;box-sizing:border-box;border:1px solid #c0c0c0;border-bottom:1.5px solid #a8a8a8;"></div>
<div class="t" style="top:314.02px;font-size:12.5px;line-height:12.5px;color:#111;letter-spacing:0.1px;left:-199.55px;width:600px;text-align:center;">N&nbsp;N&nbsp;N</div>
<div style="left:134px;top:332px;width:537.5px;height:2px;background:#a0a0a0;"></div>
<div class="t" style="top:314.10px;font-size:13px;line-height:13px;color:#111;left:-139.6px;width:600px;text-align:center;">Jan</div>
<div class="t" style="top:314.80px;font-size:13px;line-height:13px;color:#111;left:-330px;width:600px;text-align:right;">0</div>
<div class="t" style="top:314.80px;font-size:13px;line-height:13px;color:#111;left:-270.7px;width:600px;text-align:right;">0</div>
<div class="t" style="top:314.80px;font-size:13px;line-height:13px;color:#111;left:-178.8px;width:600px;text-align:right;">0.00</div>
<div class="t" style="top:314.80px;font-size:13px;line-height:13px;color:#111;left:-85.70000000000005px;width:600px;text-align:right;">0.00</div>
<div class="t" style="top:314.80px;font-size:13px;line-height:13px;color:#111;left:-1px;width:600px;text-align:right;">0.00</div>
<div class="t" style="top:314.80px;font-size:13px;line-height:13px;color:#111;left:64.5px;width:600px;text-align:right;">N/A</div>
<div style="left:184px;top:311px;width:2px;height:21px;background:#c4c4c4;"></div>
<div style="left:275px;top:311px;width:2px;height:21px;background:#a0a0a0;"></div>
<div style="left:333.5px;top:311px;width:2.0px;height:21px;background:#a0a0a0;"></div>
<div style="left:426px;top:311px;width:2px;height:21px;background:#a0a0a0;"></div>
<div style="left:517.5px;top:311px;width:2.0px;height:21px;background:#a0a0a0;"></div>
<div style="left:603px;top:311px;width:2px;height:21px;background:#a0a0a0;"></div>
<div style="left:22px;top:332.8px;width:47px;height:23.599999999999966px;box-sizing:border-box;border:1px solid #c0c0c0;border-bottom:1.5px solid #a8a8a8;"></div>
<div class="t" style="top:337.62px;font-size:12.5px;line-height:12.5px;color:#111;letter-spacing:0.1px;left:-255.3px;width:600px;text-align:center;">X&nbsp;X&nbsp;X</div>
<div style="left:77.5px;top:332.8px;width:47.5px;height:23.599999999999966px;box-sizing:border-box;border:1px solid #c0c0c0;border-bottom:1.5px solid #a8a8a8;"></div>
<div class="t" style="top:337.62px;font-size:12.5px;line-height:12.5px;color:#111;letter-spacing:0.1px;left:-199.55px;width:600px;text-align:center;">X&nbsp;X&nbsp;X</div>
<div style="left:134px;top:355px;width:537.5px;height:2px;background:#a0a0a0;"></div>
<div class="t" style="top:337.20px;font-size:13px;line-height:13px;color:#111;left:-139.8px;width:600px;text-align:center;">Feb</div>
<div class="t" style="top:337.50px;font-size:13px;line-height:13px;color:#111;left:-330px;width:600px;text-align:right;">30</div>
<div class="t" style="top:337.50px;font-size:13px;line-height:13px;color:#111;left:-270.7px;width:600px;text-align:right;">0</div>
<div class="t" style="top:337.50px;font-size:13px;line-height:13px;color:#111;left:-178.8px;width:600px;text-align:right;">188.70</div>
<div class="t" style="top:337.50px;font-size:13px;line-height:13px;color:#111;left:-85.70000000000005px;width:600px;text-align:right;">6.29</div>
<div class="t" style="top:337.50px;font-size:13px;line-height:13px;color:#111;left:-1px;width:600px;text-align:right;">21.70</div>
<div class="t" style="top:337.50px;font-size:13px;line-height:13px;color:#111;left:64.5px;width:600px;text-align:right;">11.50</div>
<div style="left:184px;top:335px;width:2px;height:20px;background:#c4c4c4;"></div>
<div style="left:275px;top:335px;width:2px;height:20px;background:#a0a0a0;"></div>
<div style="left:333.5px;top:335px;width:2.0px;height:20px;background:#a0a0a0;"></div>
<div style="left:426px;top:335px;width:2px;height:20px;background:#a0a0a0;"></div>
<div style="left:517.5px;top:335px;width:2.0px;height:20px;background:#a0a0a0;"></div>
<div style="left:603px;top:335px;width:2px;height:20px;background:#a0a0a0;"></div>
<div style="left:22px;top:356.4px;width:47px;height:24.5px;box-sizing:border-box;border:1px solid #c0c0c0;border-bottom:1.5px solid #a8a8a8;"></div>
<div class="t" style="top:362.12px;font-size:12.5px;line-height:12.5px;color:#111;letter-spacing:0.1px;left:-255.3px;width:600px;text-align:center;">N&nbsp;N&nbsp;N</div>
<div style="left:77.5px;top:356.4px;width:47.5px;height:24.5px;box-sizing:border-box;border:1px solid #c0c0c0;border-bottom:1.5px solid #a8a8a8;"></div>
<div class="t" style="top:362.12px;font-size:12.5px;line-height:12.5px;color:#111;letter-spacing:0.1px;left:-199.55px;width:600px;text-align:center;">N&nbsp;N&nbsp;N</div>
<div style="left:134px;top:380px;width:537.5px;height:2px;background:#a0a0a0;"></div>
<div class="t" style="top:361.30px;font-size:13px;line-height:13px;color:#111;left:-140px;width:600px;text-align:center;">Mar</div>
<div class="t" style="top:361.10px;font-size:13px;line-height:13px;color:#111;left:-330px;width:600px;text-align:right;">0</div>
<div class="t" style="top:361.10px;font-size:13px;line-height:13px;color:#111;left:-270.7px;width:600px;text-align:right;">0</div>
<div class="t" style="top:361.10px;font-size:13px;line-height:13px;color:#111;left:-178.8px;width:600px;text-align:right;">0.00</div>
<div class="t" style="top:361.10px;font-size:13px;line-height:13px;color:#111;left:-85.70000000000005px;width:600px;text-align:right;">0.00</div>
<div class="t" style="top:361.10px;font-size:13px;line-height:13px;color:#111;left:-1px;width:600px;text-align:right;">0.00</div>
<div class="t" style="top:361.10px;font-size:13px;line-height:13px;color:#111;left:64.5px;width:600px;text-align:right;">N/A</div>
<div style="left:184px;top:358px;width:2px;height:22px;background:#c4c4c4;"></div>
<div style="left:275px;top:358px;width:2px;height:22px;background:#a0a0a0;"></div>
<div style="left:333.5px;top:358px;width:2.0px;height:22px;background:#a0a0a0;"></div>
<div style="left:426px;top:358px;width:2px;height:22px;background:#a0a0a0;"></div>
<div style="left:517.5px;top:358px;width:2.0px;height:22px;background:#a0a0a0;"></div>
<div style="left:603px;top:358px;width:2px;height:22px;background:#a0a0a0;"></div>
<div style="left:22px;top:380.9px;width:47px;height:22.600000000000023px;box-sizing:border-box;border:1px solid #c0c0c0;border-bottom:1.5px solid #a8a8a8;"></div>
<div class="t" style="top:384.72px;font-size:12.5px;line-height:12.5px;color:#111;letter-spacing:0.1px;left:-255.3px;width:600px;text-align:center;">N&nbsp;N&nbsp;N</div>
<div style="left:77.5px;top:380.9px;width:47.5px;height:22.600000000000023px;box-sizing:border-box;border:1px solid #c0c0c0;border-bottom:1.5px solid #a8a8a8;"></div>
<div class="t" style="top:384.72px;font-size:12.5px;line-height:12.5px;color:#111;letter-spacing:0.1px;left:-199.55px;width:600px;text-align:center;">N&nbsp;N&nbsp;N</div>
<div style="left:134px;top:403px;width:537.5px;height:2px;background:#a0a0a0;"></div>
<div class="t" style="top:385.00px;font-size:13px;line-height:13px;color:#111;left:-140.9px;width:600px;text-align:center;">Apr</div>
<div class="t" style="top:385.60px;font-size:13px;line-height:13px;color:#111;left:-330px;width:600px;text-align:right;">0</div>
<div class="t" style="top:385.60px;font-size:13px;line-height:13px;color:#111;left:-270.7px;width:600px;text-align:right;">0</div>
<div class="t" style="top:385.60px;font-size:13px;line-height:13px;color:#111;left:-178.8px;width:600px;text-align:right;">0.00</div>
<div class="t" style="top:385.60px;font-size:13px;line-height:13px;color:#111;left:-85.70000000000005px;width:600px;text-align:right;">0.00</div>
<div class="t" style="top:385.60px;font-size:13px;line-height:13px;color:#111;left:-1px;width:600px;text-align:right;">0.00</div>
<div class="t" style="top:385.60px;font-size:13px;line-height:13px;color:#111;left:64.5px;width:600px;text-align:right;">N/A</div>
<div style="left:184px;top:383px;width:2px;height:20px;background:#c4c4c4;"></div>
<div style="left:275px;top:383px;width:2px;height:20px;background:#a0a0a0;"></div>
<div style="left:333.5px;top:383px;width:2.0px;height:20px;background:#a0a0a0;"></div>
<div style="left:426px;top:383px;width:2px;height:20px;background:#a0a0a0;"></div>
<div style="left:517.5px;top:383px;width:2.0px;height:20px;background:#a0a0a0;"></div>
<div style="left:603px;top:383px;width:2px;height:20px;background:#a0a0a0;"></div>
<div style="left:22px;top:403.5px;width:47px;height:25.5px;box-sizing:border-box;border:1px solid #c0c0c0;border-bottom:1.5px solid #a8a8a8;"></div>
<div class="t" style="top:410.22px;font-size:12.5px;line-height:12.5px;color:#111;letter-spacing:0.1px;left:-255.3px;width:600px;text-align:center;">A&nbsp;D&nbsp;C</div>
<div style="left:77.5px;top:403.5px;width:47.5px;height:25.5px;box-sizing:border-box;border:1px solid #c0c0c0;border-bottom:1.5px solid #a8a8a8;"></div>
<div class="t" style="top:410.22px;font-size:12.5px;line-height:12.5px;color:#111;letter-spacing:0.1px;left:-199.55px;width:600px;text-align:center;">X&nbsp;X&nbsp;X</div>
<div style="left:134px;top:428px;width:537.5px;height:2px;background:#a0a0a0;"></div>
<div class="t" style="top:409.00px;font-size:13px;line-height:13px;color:#111;left:-140.6px;width:600px;text-align:center;">May</div>
<div class="t" style="top:408.80px;font-size:13px;line-height:13px;color:#111;left:-330px;width:600px;text-align:right;">0</div>
<div class="t" style="top:408.80px;font-size:13px;line-height:13px;color:#111;left:-270.7px;width:600px;text-align:right;">0</div>
<div class="t" style="top:408.80px;font-size:13px;line-height:13px;color:#111;left:-178.8px;width:600px;text-align:right;">0.00</div>
<div class="t" style="top:408.80px;font-size:13px;line-height:13px;color:#111;left:-85.70000000000005px;width:600px;text-align:right;">0.00</div>
<div class="t" style="top:408.80px;font-size:13px;line-height:13px;color:#111;left:-1px;width:600px;text-align:right;">0.00</div>
<div class="t" style="top:408.80px;font-size:13px;line-height:13px;color:#111;left:64.5px;width:600px;text-align:right;">N/A</div>
<div style="left:184px;top:406px;width:2px;height:22px;background:#c4c4c4;"></div>
<div style="left:275px;top:406px;width:2px;height:22px;background:#a0a0a0;"></div>
<div style="left:333.5px;top:406px;width:2.0px;height:22px;background:#a0a0a0;"></div>
<div style="left:426px;top:406px;width:2px;height:22px;background:#a0a0a0;"></div>
<div style="left:517.5px;top:406px;width:2.0px;height:22px;background:#a0a0a0;"></div>
<div style="left:603px;top:406px;width:2px;height:22px;background:#a0a0a0;"></div>
<div style="left:22px;top:429px;width:47px;height:22.5px;box-sizing:border-box;border:1px solid #c0c0c0;border-bottom:1.5px solid #a8a8a8;"></div>
<div class="t" style="top:432.72px;font-size:12.5px;line-height:12.5px;color:#111;letter-spacing:0.1px;left:-255.3px;width:600px;text-align:center;">A&nbsp;D&nbsp;C</div>
<div style="left:77.5px;top:429px;width:47.5px;height:22.5px;box-sizing:border-box;border:1px solid #c0c0c0;border-bottom:1.5px solid #a8a8a8;"></div>
<div class="t" style="top:432.72px;font-size:12.5px;line-height:12.5px;color:#111;letter-spacing:0.1px;left:-199.55px;width:600px;text-align:center;">C&nbsp;C&nbsp;C</div>
<div style="left:134px;top:451px;width:537.5px;height:2px;background:#a0a0a0;"></div>
<div class="t" style="top:433.00px;font-size:13px;line-height:13px;color:#111;left:-139.6px;width:600px;text-align:center;">Jun</div>
<div class="t" style="top:433.70px;font-size:13px;line-height:13px;color:#111;left:-330px;width:600px;text-align:right;">1</div>
<div class="t" style="top:433.70px;font-size:13px;line-height:13px;color:#111;left:-270.7px;width:600px;text-align:right;">0</div>
<div class="t" style="top:433.70px;font-size:13px;line-height:13px;color:#111;left:-178.8px;width:600px;text-align:right;">6.29</div>
<div class="t" style="top:433.70px;font-size:13px;line-height:13px;color:#111;left:-85.70000000000005px;width:600px;text-align:right;">6.29</div>
<div class="t" style="top:433.70px;font-size:13px;line-height:13px;color:#111;left:-1px;width:600px;text-align:right;">0.72</div>
<div class="t" style="top:433.70px;font-size:13px;line-height:13px;color:#111;left:64.5px;width:600px;text-align:right;">11.50</div>
<div style="left:184px;top:431px;width:2px;height:20px;background:#c4c4c4;"></div>
<div style="left:275px;top:431px;width:2px;height:20px;background:#a0a0a0;"></div>
<div style="left:333.5px;top:431px;width:2.0px;height:20px;background:#a0a0a0;"></div>
<div style="left:426px;top:431px;width:2px;height:20px;background:#a0a0a0;"></div>
<div style="left:517.5px;top:431px;width:2.0px;height:20px;background:#a0a0a0;"></div>
<div style="left:603px;top:431px;width:2px;height:20px;background:#a0a0a0;"></div>
<div style="left:22px;top:451.5px;width:47px;height:24.100000000000023px;box-sizing:border-box;border:1px solid #c0c0c0;border-bottom:1.5px solid #a8a8a8;"></div>
<div class="t" style="top:456.82px;font-size:12.5px;line-height:12.5px;color:#111;letter-spacing:0.1px;left:-255.3px;width:600px;text-align:center;">X&nbsp;X&nbsp;X</div>
<div style="left:77.5px;top:451.5px;width:47.5px;height:24.100000000000023px;box-sizing:border-box;border:1px solid #c0c0c0;border-bottom:1.5px solid #a8a8a8;"></div>
<div class="t" style="top:456.82px;font-size:12.5px;line-height:12.5px;color:#111;letter-spacing:0.1px;left:-199.55px;width:600px;text-align:center;">X&nbsp;X&nbsp;X</div>
<div style="left:134px;top:475px;width:537.5px;height:2px;background:#a0a0a0;"></div>
<div class="t" style="top:458.00px;font-size:13px;line-height:13px;color:#111;left:-136.5px;width:600px;text-align:center;">Jul</div>
<div class="t" style="top:455.90px;font-size:13px;line-height:13px;color:#111;left:-330px;width:600px;text-align:right;">1</div>
<div class="t" style="top:455.90px;font-size:13px;line-height:13px;color:#111;left:-270.7px;width:600px;text-align:right;">0</div>
<div class="t" style="top:455.90px;font-size:13px;line-height:13px;color:#111;left:-178.8px;width:600px;text-align:right;">6.99</div>
<div class="t" style="top:455.90px;font-size:13px;line-height:13px;color:#111;left:-85.70000000000005px;width:600px;text-align:right;">6.99</div>
<div class="t" style="top:455.90px;font-size:13px;line-height:13px;color:#111;left:-1px;width:600px;text-align:right;">1.42</div>
<div class="t" style="top:455.90px;font-size:13px;line-height:13px;color:#111;left:64.5px;width:600px;text-align:right;">20.36</div>
<div style="left:184px;top:454px;width:2px;height:21px;background:#c4c4c4;"></div>
<div style="left:275px;top:454px;width:2px;height:21px;background:#a0a0a0;"></div>
<div style="left:333.5px;top:454px;width:2.0px;height:21px;background:#a0a0a0;"></div>
<div style="left:426px;top:454px;width:2px;height:21px;background:#a0a0a0;"></div>
<div style="left:517.5px;top:454px;width:2.0px;height:21px;background:#a0a0a0;"></div>
<div style="left:603px;top:454px;width:2px;height:21px;background:#a0a0a0;"></div>
<div style="left:22px;top:475.6px;width:47px;height:23.599999999999966px;box-sizing:border-box;border:1px solid #c0c0c0;border-bottom:1.5px solid #a8a8a8;"></div>
<div class="t" style="top:480.42px;font-size:12.5px;line-height:12.5px;color:#111;letter-spacing:0.1px;left:-255.3px;width:600px;text-align:center;">N&nbsp;N&nbsp;N</div>
<div style="left:77.5px;top:475.6px;width:47.5px;height:23.599999999999966px;box-sizing:border-box;border:1px solid #c0c0c0;border-bottom:1.5px solid #a8a8a8;"></div>
<div class="t" style="top:480.42px;font-size:12.5px;line-height:12.5px;color:#111;letter-spacing:0.1px;left:-199.55px;width:600px;text-align:center;">N&nbsp;N&nbsp;N</div>
<div style="left:134px;top:498px;width:537.5px;height:2px;background:#a0a0a0;"></div>
<div class="t" style="top:481.30px;font-size:13px;line-height:13px;color:#111;left:-141.4px;width:600px;text-align:center;">Aug</div>
<div class="t" style="top:481.00px;font-size:13px;line-height:13px;color:#111;left:-330px;width:600px;text-align:right;">0</div>
<div class="t" style="top:481.00px;font-size:13px;line-height:13px;color:#111;left:-270.7px;width:600px;text-align:right;">0</div>
<div class="t" style="top:481.00px;font-size:13px;line-height:13px;color:#111;left:-178.8px;width:600px;text-align:right;">0.00</div>
<div class="t" style="top:481.00px;font-size:13px;line-height:13px;color:#111;left:-85.70000000000005px;width:600px;text-align:right;">0.00</div>
<div class="t" style="top:481.00px;font-size:13px;line-height:13px;color:#111;left:-1px;width:600px;text-align:right;">0.00</div>
<div class="t" style="top:481.00px;font-size:13px;line-height:13px;color:#111;left:64.5px;width:600px;text-align:right;">N/A</div>
<div style="left:184px;top:478px;width:2px;height:20px;background:#c4c4c4;"></div>
<div style="left:275px;top:478px;width:2px;height:20px;background:#a0a0a0;"></div>
<div style="left:333.5px;top:478px;width:2.0px;height:20px;background:#a0a0a0;"></div>
<div style="left:426px;top:478px;width:2px;height:20px;background:#a0a0a0;"></div>
<div style="left:517.5px;top:478px;width:2.0px;height:20px;background:#a0a0a0;"></div>
<div style="left:603px;top:478px;width:2px;height:20px;background:#a0a0a0;"></div>
<div style="left:22px;top:499.2px;width:47px;height:24.500000000000057px;box-sizing:border-box;border:1px solid #c0c0c0;border-bottom:1.5px solid #a8a8a8;"></div>
<div class="t" style="top:504.92px;font-size:12.5px;line-height:12.5px;color:#111;letter-spacing:0.1px;left:-255.3px;width:600px;text-align:center;">N&nbsp;N&nbsp;N</div>
<div style="left:77.5px;top:499.2px;width:47.5px;height:24.500000000000057px;box-sizing:border-box;border:1px solid #c0c0c0;border-bottom:1.5px solid #a8a8a8;"></div>
<div class="t" style="top:504.92px;font-size:12.5px;line-height:12.5px;color:#111;letter-spacing:0.1px;left:-199.55px;width:600px;text-align:center;">N&nbsp;N&nbsp;N</div>
<div style="left:134px;top:523px;width:537.5px;height:2px;background:#a0a0a0;"></div>
<div class="t" style="top:506.00px;font-size:13px;line-height:13px;color:#111;left:-138.3px;width:600px;text-align:center;">Spt</div>
<div class="t" style="top:504.00px;font-size:13px;line-height:13px;color:#111;left:-330px;width:600px;text-align:right;">0</div>
<div class="t" style="top:504.00px;font-size:13px;line-height:13px;color:#111;left:-270.7px;width:600px;text-align:right;">0</div>
<div class="t" style="top:504.00px;font-size:13px;line-height:13px;color:#111;left:-178.8px;width:600px;text-align:right;">0.00</div>
<div class="t" style="top:504.00px;font-size:13px;line-height:13px;color:#111;left:-85.70000000000005px;width:600px;text-align:right;">0.00</div>
<div class="t" style="top:504.00px;font-size:13px;line-height:13px;color:#111;left:-1px;width:600px;text-align:right;">0.00</div>
<div class="t" style="top:504.00px;font-size:13px;line-height:13px;color:#111;left:64.5px;width:600px;text-align:right;">N/A</div>
<div style="left:184px;top:501px;width:2px;height:22px;background:#c4c4c4;"></div>
<div style="left:275px;top:501px;width:2px;height:22px;background:#a0a0a0;"></div>
<div style="left:333.5px;top:501px;width:2.0px;height:22px;background:#a0a0a0;"></div>
<div style="left:426px;top:501px;width:2px;height:22px;background:#a0a0a0;"></div>
<div style="left:517.5px;top:501px;width:2.0px;height:22px;background:#a0a0a0;"></div>
<div style="left:603px;top:501px;width:2px;height:22px;background:#a0a0a0;"></div>
<div style="left:22px;top:523.7px;width:47px;height:23.59999999999991px;box-sizing:border-box;border:1px solid #c0c0c0;border-bottom:1.5px solid #a8a8a8;"></div>
<div class="t" style="top:528.52px;font-size:12.5px;line-height:12.5px;color:#111;letter-spacing:0.1px;left:-255.3px;width:600px;text-align:center;">X&nbsp;X&nbsp;X</div>
<div style="left:77.5px;top:523.7px;width:47.5px;height:23.59999999999991px;box-sizing:border-box;border:1px solid #c0c0c0;border-bottom:1.5px solid #a8a8a8;"></div>
<div class="t" style="top:528.52px;font-size:12.5px;line-height:12.5px;color:#111;letter-spacing:0.1px;left:-199.55px;width:600px;text-align:center;">X&nbsp;X&nbsp;X</div>
<div style="left:134px;top:546px;width:537.5px;height:2px;background:#a0a0a0;"></div>
<div class="t" style="top:529.70px;font-size:13px;line-height:13px;color:#111;left:-138.8px;width:600px;text-align:center;">Oct</div>
<div class="t" style="top:528.40px;font-size:13px;line-height:13px;color:#111;left:-330px;width:600px;text-align:right;">1</div>
<div class="t" style="top:528.40px;font-size:13px;line-height:13px;color:#111;left:-270.7px;width:600px;text-align:right;">0</div>
<div class="t" style="top:528.40px;font-size:13px;line-height:13px;color:#111;left:-178.8px;width:600px;text-align:right;">6.99</div>
<div class="t" style="top:528.40px;font-size:13px;line-height:13px;color:#111;left:-85.70000000000005px;width:600px;text-align:right;">6.99</div>
<div class="t" style="top:528.40px;font-size:13px;line-height:13px;color:#111;left:-1px;width:600px;text-align:right;">1.42</div>
<div class="t" style="top:528.40px;font-size:13px;line-height:13px;color:#111;left:64.5px;width:600px;text-align:right;">20.36</div>
<div style="left:184px;top:526px;width:2px;height:20px;background:#c4c4c4;"></div>
<div style="left:275px;top:526px;width:2px;height:20px;background:#a0a0a0;"></div>
<div style="left:333.5px;top:526px;width:2.0px;height:20px;background:#a0a0a0;"></div>
<div style="left:426px;top:526px;width:2px;height:20px;background:#a0a0a0;"></div>
<div style="left:517.5px;top:526px;width:2.0px;height:20px;background:#a0a0a0;"></div>
<div style="left:603px;top:526px;width:2px;height:20px;background:#a0a0a0;"></div>
<div style="left:22px;top:547.3px;width:47px;height:24.5px;box-sizing:border-box;border:1px solid #c0c0c0;border-bottom:1.5px solid #a8a8a8;"></div>
<div class="t" style="top:553.02px;font-size:12.5px;line-height:12.5px;color:#111;letter-spacing:0.1px;left:-255.3px;width:600px;text-align:center;">X&nbsp;X&nbsp;X</div>
<div style="left:77.5px;top:547.3px;width:47.5px;height:24.5px;box-sizing:border-box;border:1px solid #c0c0c0;border-bottom:1.5px solid #a8a8a8;"></div>
<div class="t" style="top:553.02px;font-size:12.5px;line-height:12.5px;color:#111;letter-spacing:0.1px;left:-199.55px;width:600px;text-align:center;">X&nbsp;X&nbsp;X</div>
<div style="left:134px;top:571px;width:537.5px;height:2px;background:#a0a0a0;"></div>
<div class="t" style="top:553.40px;font-size:13px;line-height:13px;color:#111;left:-141.1px;width:600px;text-align:center;">Nov</div>
<div class="t" style="top:551.60px;font-size:13px;line-height:13px;color:#111;left:-330px;width:600px;text-align:right;">1</div>
<div class="t" style="top:551.60px;font-size:13px;line-height:13px;color:#111;left:-270.7px;width:600px;text-align:right;">0</div>
<div class="t" style="top:551.60px;font-size:13px;line-height:13px;color:#111;left:-178.8px;width:600px;text-align:right;">6.29</div>
<div class="t" style="top:551.60px;font-size:13px;line-height:13px;color:#111;left:-85.70000000000005px;width:600px;text-align:right;">6.29</div>
<div class="t" style="top:551.60px;font-size:13px;line-height:13px;color:#111;left:-1px;width:600px;text-align:right;">0.72</div>
<div class="t" style="top:551.60px;font-size:13px;line-height:13px;color:#111;left:64.5px;width:600px;text-align:right;">11.50</div>
<div style="left:184px;top:549px;width:2px;height:22px;background:#c4c4c4;"></div>
<div style="left:275px;top:549px;width:2px;height:22px;background:#a0a0a0;"></div>
<div style="left:333.5px;top:549px;width:2.0px;height:22px;background:#a0a0a0;"></div>
<div style="left:426px;top:549px;width:2px;height:22px;background:#a0a0a0;"></div>
<div style="left:517.5px;top:549px;width:2.0px;height:22px;background:#a0a0a0;"></div>
<div style="left:603px;top:549px;width:2px;height:22px;background:#a0a0a0;"></div>
<div style="left:22px;top:571.8px;width:47px;height:24.200000000000045px;box-sizing:border-box;border:1px solid #c0c0c0;border-bottom:1.5px solid #a8a8a8;"></div>
<div class="t" style="top:577.22px;font-size:12.5px;line-height:12.5px;color:#111;letter-spacing:0.1px;left:-255.3px;width:600px;text-align:center;">N&nbsp;N&nbsp;N</div>
<div style="left:77.5px;top:571.8px;width:47.5px;height:24.200000000000045px;box-sizing:border-box;border:1px solid #c0c0c0;border-bottom:1.5px solid #a8a8a8;"></div>
<div class="t" style="top:577.22px;font-size:12.5px;line-height:12.5px;color:#111;letter-spacing:0.1px;left:-199.55px;width:600px;text-align:center;">N&nbsp;N&nbsp;N</div>
<div style="left:134px;top:595px;width:537.5px;height:2px;background:#a0a0a0;"></div>
<div class="t" style="top:577.10px;font-size:13px;line-height:13px;color:#111;left:-140.6px;width:600px;text-align:center;">Dec</div>
<div class="t" style="top:575.70px;font-size:13px;line-height:13px;color:#111;left:-330px;width:600px;text-align:right;">0</div>
<div class="t" style="top:575.70px;font-size:13px;line-height:13px;color:#111;left:-270.7px;width:600px;text-align:right;">0</div>
<div class="t" style="top:575.70px;font-size:13px;line-height:13px;color:#111;left:-178.8px;width:600px;text-align:right;">0.00</div>
<div class="t" style="top:575.70px;font-size:13px;line-height:13px;color:#111;left:-85.70000000000005px;width:600px;text-align:right;">0.00</div>
<div class="t" style="top:575.70px;font-size:13px;line-height:13px;color:#111;left:-1px;width:600px;text-align:right;">0.00</div>
<div class="t" style="top:575.70px;font-size:13px;line-height:13px;color:#111;left:64.5px;width:600px;text-align:right;">N/A</div>
<div style="left:184px;top:574px;width:2px;height:21px;background:#c4c4c4;"></div>
<div style="left:275px;top:574px;width:2px;height:21px;background:#a0a0a0;"></div>
<div style="left:333.5px;top:574px;width:2.0px;height:21px;background:#a0a0a0;"></div>
<div style="left:426px;top:574px;width:2px;height:21px;background:#a0a0a0;"></div>
<div style="left:517.5px;top:574px;width:2.0px;height:21px;background:#a0a0a0;"></div>
<div style="left:603px;top:574px;width:2px;height:21px;background:#a0a0a0;"></div>
<div style="left:134px;top:309.5px;width:1px;height:286.5px;background:#c8c8c8;"></div>
<div style="left:670.5px;top:309.5px;width:1.0px;height:286.5px;background:#c8c8c8;"></div>
<div style="left:134px;top:602.5px;width:537.5px;height:24.5px;box-sizing:border-box;border:1px solid #b4b4b4;"></div>
<div class="t" style="top:610.60px;font-size:13px;line-height:13px;color:#111;left:-140.5px;width:600px;text-align:center;">YTD</div>
<div class="t" style="top:608.80px;font-size:13px;line-height:13px;color:#111;left:-330px;width:600px;text-align:right;">34</div>
<div class="t" style="top:608.80px;font-size:13px;line-height:13px;color:#111;left:-270.7px;width:600px;text-align:right;">0</div>
<div class="t" style="top:608.80px;font-size:13px;line-height:13px;color:#111;left:-178.8px;width:600px;text-align:right;">215.26</div>
<div class="t" style="top:608.80px;font-size:13px;line-height:13px;color:#111;left:-85.70000000000005px;width:600px;text-align:right;">6.33</div>
<div class="t" style="top:608.80px;font-size:13px;line-height:13px;color:#111;left:-1px;width:600px;text-align:right;">25.99</div>
<div class="t" style="top:608.80px;font-size:13px;line-height:13px;color:#111;left:64.5px;width:600px;text-align:right;">12.07</div>
<div style="left:184px;top:604px;width:2px;height:22.5px;background:#a0a0a0;"></div>
<div style="left:276px;top:604px;width:1px;height:22.5px;background:#b4b4b4;"></div>
<div style="left:333.5px;top:604px;width:2.0px;height:22.5px;background:#a0a0a0;"></div>
<div style="left:427px;top:604px;width:1px;height:22.5px;background:#b4b4b4;"></div>
<div style="left:517.5px;top:604px;width:2.0px;height:22.5px;background:#a0a0a0;"></div>
<div style="left:604px;top:604px;width:1px;height:22.5px;background:#b4b4b4;"></div>
<div style="left:124px;top:281px;width:63px;height:31.5px;box-sizing:border-box;border:4px solid #ff3300;"></div>
<div style="left:22px;top:599px;width:30.5px;height:27px;box-sizing:border-box;border:1.5px solid #3a8ee6;border-radius:3px;background:#e1effb;"></div>
<svg style="position:absolute;left:33px;top:608px" width="7" height="10"><path d="M6 0 L1 5 L6 10 Z" fill="#8b0000"/></svg>
<div style="left:57.5px;top:599px;width:30.0px;height:27px;box-sizing:border-box;background:#fbfbfb;border:1px solid #d2d2d2;border-radius:3px;"></div>
<div style="left:68px;top:608px;width:9px;height:9px;background:#0a4a0a;"></div>
<div style="left:93.5px;top:599px;width:30.5px;height:27px;box-sizing:border-box;background:#fbfbfb;border:1px solid #d2d2d2;border-radius:3px;"></div>
<svg style="position:absolute;left:105px;top:608px" width="7" height="10"><path d="M1 0 L6 5 L1 10 Z" fill="#8b0000"/></svg>
<div style="left:17px;top:630px;width:47.5px;height:26px;box-sizing:border-box;background:#fbfbfb;border:1px solid #d2d2d2;border-radius:3px;"></div>
<div class="t" style="top:637.00px;font-size:13px;line-height:13px;color:#222;left:-259.25px;width:600px;text-align:center;">PrtScn</div>
<div style="left:599px;top:630px;width:82px;height:26.5px;background:#ffa0a0;border-radius:3px;"></div>
<div class="t" style="top:637.00px;font-size:13px;line-height:13px;color:#111;font-weight:bold;left:340px;width:600px;text-align:center;"><u>C</u>lose</div>
</body></html>
